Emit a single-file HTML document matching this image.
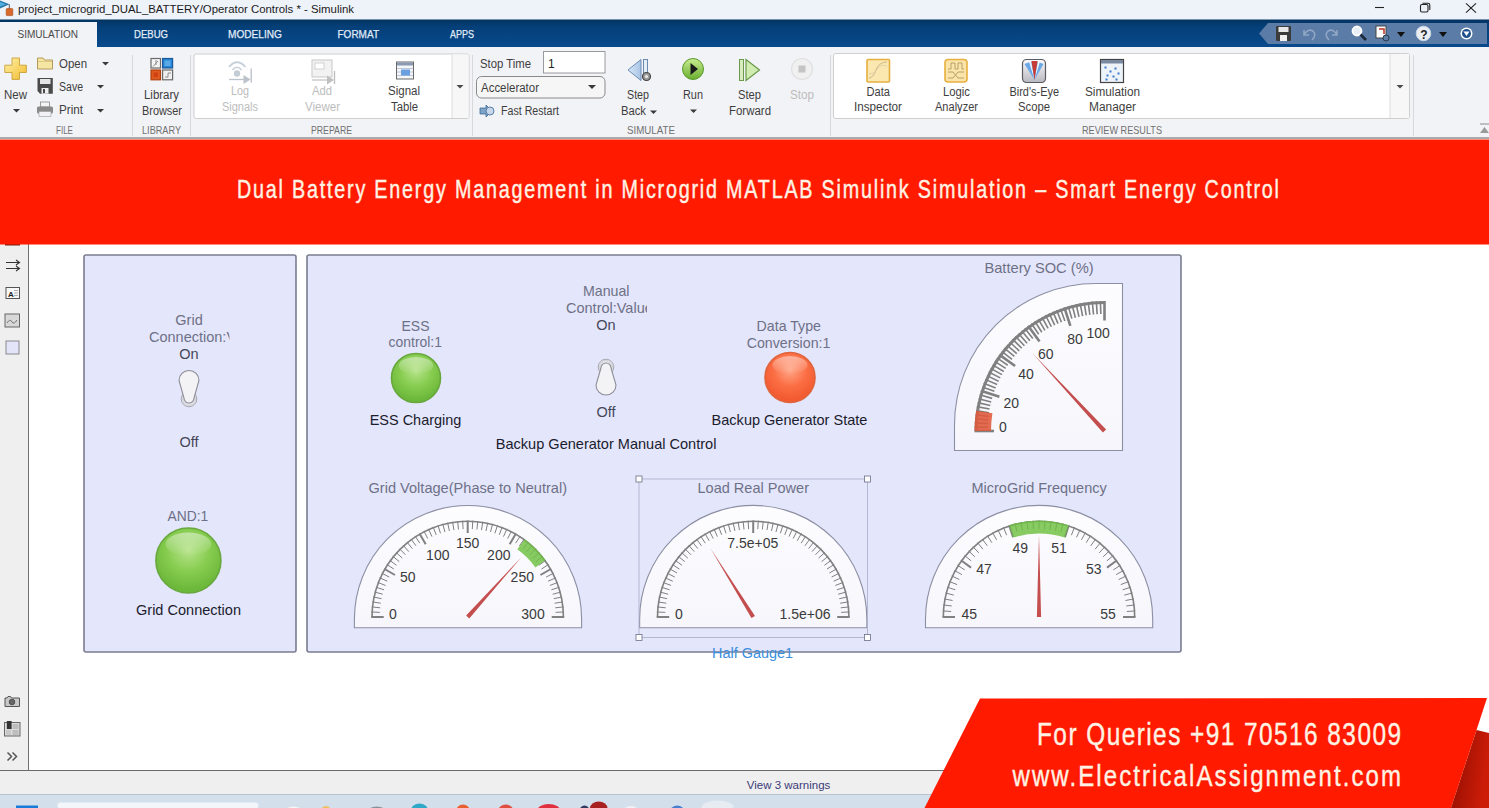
<!DOCTYPE html>
<html><head><meta charset="utf-8"><title>Simulink Operator Controls</title>
<style>
*{margin:0;padding:0;box-sizing:border-box}
html,body{width:1489px;height:808px;overflow:hidden;background:#ffffff;font-family:"Liberation Sans",sans-serif}
svg text{white-space:pre}
</style></head><body>
<svg width="1489" height="808" viewBox="0 0 1489 808" style="position:absolute;left:0;top:0;font-family:'Liberation Sans',sans-serif"><defs>
<linearGradient id="gblue" x1="0" y1="0" x2="0" y2="1"><stop offset="0" stop-color="#02335f"/><stop offset="0.25" stop-color="#053f78"/><stop offset="1" stop-color="#074a8c"/></linearGradient>
<radialGradient id="ledg" cx="0.5" cy="0.35" r="0.6"><stop offset="0" stop-color="#b6e38a"/><stop offset="0.55" stop-color="#86cc4f"/><stop offset="1" stop-color="#6cb83a"/></radialGradient>
<linearGradient id="ledgh" x1="0" y1="0" x2="0" y2="1"><stop offset="0" stop-color="#ffffff" stop-opacity="0.75"/><stop offset="1" stop-color="#ffffff" stop-opacity="0"/></linearGradient>
<radialGradient id="ledr" cx="0.5" cy="0.35" r="0.6"><stop offset="0" stop-color="#ffa688"/><stop offset="0.55" stop-color="#fb6e44"/><stop offset="1" stop-color="#f25a30"/></radialGradient>
<linearGradient id="plus" x1="0" y1="0" x2="1" y2="1"><stop offset="0" stop-color="#fff2a8"/><stop offset="1" stop-color="#f2bb30"/></linearGradient>
<linearGradient id="gframe" x1="0" y1="0" x2="0" y2="1"><stop offset="0" stop-color="#fdfdff"/><stop offset="1" stop-color="#f6f6fc"/></linearGradient>
<linearGradient id="shad" x1="0" y1="0" x2="1" y2="0.3"><stop offset="0" stop-color="#8e0c00"/><stop offset="1" stop-color="#cc1c08"/></linearGradient>
<linearGradient id="run" x1="0" y1="0" x2="0" y2="1"><stop offset="0" stop-color="#c8ec90"/><stop offset="1" stop-color="#6aae30"/></linearGradient>
<linearGradient id="sbk" x1="0" y1="0" x2="1" y2="0"><stop offset="0" stop-color="#d8e8f8"/><stop offset="1" stop-color="#a8c4e4"/></linearGradient>
<linearGradient id="bev" x1="0" y1="0" x2="0" y2="1"><stop offset="0" stop-color="#fafafa"/><stop offset="1" stop-color="#b8b8c0"/></linearGradient>
</defs>
<rect x="0" y="0" width="1489" height="20" fill="#eef2f9" rx="0" />
<path d="M0,0.5 L9.5,4.3 L0,8.5 Z" fill="#2a78a8" />
<path d="M0,2 L6,4.3 L0,6.5 Z" fill="#50b0e0" />
<line x1="9.30" y1="4.30" x2="9.30" y2="9.00" stroke="#444" stroke-width="0.9" />
<rect x="6.2" y="8.6" width="6.6" height="7" fill="#d8682c" stroke="#a84a10" stroke-width="0.6" rx="0.8" />
<text x="18.00" y="13.40" font-size="11.5" fill="#1b1b1b" textLength="336.00" lengthAdjust="spacingAndGlyphs" font-weight="normal" >project_microgrid_DUAL_BATTERY/Operator Controls * - Simulink</text>
<line x1="1375.00" y1="7.50" x2="1384.00" y2="7.50" stroke="#222" stroke-width="1.1" />
<rect x="1420.5" y="4.5" width="7.5" height="7.5" fill="none" stroke="#222" stroke-width="1.1" rx="1.5" />
<path d="M1422.5,3.2 L1428,3.2 Q1429.8,3.2 1429.8,5 L1429.8,10" fill="none" stroke="#222" stroke-width="1.1" />
<line x1="1466.00" y1="3.30" x2="1476.00" y2="12.60" stroke="#222" stroke-width="1.1" />
<line x1="1476.00" y1="3.30" x2="1466.00" y2="12.60" stroke="#222" stroke-width="1.1" />
<rect x="0" y="19.5" width="1489" height="27.5" fill="url(#gblue)" rx="0" />
<rect x="0" y="22" width="97" height="25" fill="#f2f3f6" rx="0" />
<text x="17.50" y="38.10" font-size="11.5" fill="#4a4a4a" textLength="60.50" lengthAdjust="spacingAndGlyphs" font-weight="normal" >SIMULATION</text>
<text x="134.00" y="37.90" font-size="11.5" fill="#e2ecf8" textLength="34.00" lengthAdjust="spacingAndGlyphs" font-weight="normal" stroke="#e2ecf8" stroke-width="0.25">DEBUG</text>
<text x="228.00" y="37.90" font-size="11.5" fill="#e2ecf8" textLength="54.00" lengthAdjust="spacingAndGlyphs" font-weight="normal" stroke="#e2ecf8" stroke-width="0.25">MODELING</text>
<text x="337.50" y="37.90" font-size="11.5" fill="#e2ecf8" textLength="41.50" lengthAdjust="spacingAndGlyphs" font-weight="normal" stroke="#e2ecf8" stroke-width="0.25">FORMAT</text>
<text x="450.00" y="37.90" font-size="11.5" fill="#e2ecf8" textLength="24.00" lengthAdjust="spacingAndGlyphs" font-weight="normal" stroke="#e2ecf8" stroke-width="0.25">APPS</text>
<path d="M1259,33.5 L1268,23 L1487,23 L1487,44 L1268,44 Z" fill="#5a7ca6" />
<rect x="1276" y="26" width="15" height="15" fill="#3b3b3b" rx="1" />
<rect x="1278.5" y="27" width="10" height="5" fill="#e8e8e8" rx="0" />
<rect x="1280" y="35" width="7" height="6" fill="#f0f0f0" rx="0" />
<path d="M1304,30 L1304,35 L1309,35 M1304,35 Q1308,28 1313,31 Q1317,35 1312,40" fill="none" stroke="#8fa6c4" stroke-width="1.6" />
<path d="M1337,30 L1337,35 L1332,35 M1337,35 Q1333,28 1328,31 Q1324,35 1329,40" fill="none" stroke="#8fa6c4" stroke-width="1.6" />
<circle cx="1357" cy="31" r="4.5" fill="#e8eef6" stroke="#ffffff" stroke-width="1.8" />
<line x1="1360.50" y1="34.50" x2="1366.00" y2="40.00" stroke="#1a2a3a" stroke-width="2.6" />
<rect x="1376" y="26" width="10" height="12" fill="#ffffff" stroke="#444" stroke-width="1" rx="0" />
<path d="M1379,29 L1384,29 L1384,34" fill="none" stroke="#c03020" stroke-width="1.5" />
<circle cx="1386" cy="38" r="3" fill="#5a7ca6" stroke="#2a3a4a" stroke-width="1" />
<path d="M1397,32 L1405,32 L1401,37 Z" fill="#111" />
<circle cx="1423.5" cy="33.5" r="7.3" fill="#e9eef4" stroke="#c8d4e2" stroke-width="1" />
<text x="1420.16" y="38.50" font-size="12" fill="#222" font-weight="bold" >?</text>
<path d="M1439,32 L1447,32 L1443,37 Z" fill="#111" />
<circle cx="1466.5" cy="33.5" r="6" fill="#ffffff" />
<circle cx="1466.5" cy="33.5" r="4.5" fill="#1d4f8c" />
<path d="M1463.5,31.5 L1469.5,31.5 L1466.5,36 Z" fill="#fff" />
<rect x="0" y="47" width="1489" height="90" fill="#f2f3f6" rx="0" />
<rect x="0" y="137" width="1489" height="2" fill="#aaaaaa" rx="0" />
<path d="M12,58 L19.5,58 L19.5,65.2 L26.4,65.2 L26.4,72.5 L19.5,72.5 L19.5,79.4 L12,79.4 L12,72.5 L4.8,72.5 L4.8,65.2 L12,65.2 Z" fill="url(#plus)" stroke="#c9a238" stroke-width="0.9" />
<text x="4.00" y="98.50" font-size="12" fill="#3e3e3e" textLength="23.00" lengthAdjust="spacingAndGlyphs" font-weight="normal" >New</text>
<path d="M13,109 L20,109 L16.5,112.5 Z" fill="#3a3a3a" />
<path d="M37.5,58 L43,58 L44.5,60 L52.5,60 L52.5,69 L37.5,69 Z" fill="#f6e6a4" stroke="#b49a5a" stroke-width="1" />
<line x1="38.00" y1="61.50" x2="52.00" y2="61.50" stroke="#d8c27a" stroke-width="0.8" />
<text x="59.00" y="67.50" font-size="12" fill="#3e3e3e" textLength="28.00" lengthAdjust="spacingAndGlyphs" font-weight="normal" >Open</text>
<path d="M102,62 L109,62 L105.5,65.5 Z" fill="#3a3a3a" />
<path d="M37.5,78 L52.8,78 L52.8,93.7 L40,93.7 L37.5,91 Z" fill="#4a4a4a" />
<rect x="40" y="79" width="10.5" height="5" fill="#e6e6e6" rx="0" />
<rect x="41.5" y="88" width="7" height="5.7" fill="#eeeeee" rx="0" />
<rect x="43" y="89" width="2" height="4" fill="#4a4a4a" rx="0" />
<text x="59.00" y="90.70" font-size="12" fill="#3e3e3e" textLength="24.00" lengthAdjust="spacingAndGlyphs" font-weight="normal" >Save</text>
<path d="M97,85 L104,85 L100.5,88.5 Z" fill="#3a3a3a" />
<rect x="40.5" y="102" width="9" height="5" fill="#f4f4f4" stroke="#888" stroke-width="0.8" rx="0" />
<rect x="37" y="106.5" width="16" height="7" fill="#8a8a8a" rx="1.5" />
<rect x="39" y="111.5" width="12" height="5" fill="#f2f2f6" stroke="#999" stroke-width="0.6" rx="0" />
<text x="59.00" y="114.20" font-size="12" fill="#3e3e3e" textLength="24.00" lengthAdjust="spacingAndGlyphs" font-weight="normal" >Print</text>
<path d="M97,109 L104,109 L100.5,112.5 Z" fill="#3a3a3a" />
<text x="56.00" y="134.30" font-size="10.5" fill="#707070" textLength="17.00" lengthAdjust="spacingAndGlyphs" font-weight="normal" >FILE</text>
<line x1="132.50" y1="55.00" x2="132.50" y2="136.00" stroke="#d8d8da" stroke-width="1" />
<rect x="151" y="58.5" width="9.5" height="9.5" fill="#f4f4f4" stroke="#6a6a6a" stroke-width="1.2" rx="0" />
<path d="M153,66.5 L158,61 M156,60 L156,65" fill="none" stroke="#777" stroke-width="0.8" />
<rect x="162.6" y="58.5" width="10" height="9.5" fill="#2a86d8" stroke="#1a5a9a" stroke-width="1.2" rx="0" />
<rect x="164.5" y="60.5" width="6" height="5.5" fill="#5aaae8" rx="0" />
<rect x="151" y="70" width="9.5" height="9.8" fill="#e05a20" stroke="#b04010" stroke-width="1.2" rx="0" />
<rect x="153.5" y="72.5" width="4.5" height="4.5" fill="#d04010" rx="0" />
<rect x="162.6" y="70" width="10" height="9.8" fill="#f0f0f0" stroke="#6a6a6a" stroke-width="1.2" rx="0" />
<path d="M165,77 L168,77 L168,73 L171,73" fill="none" stroke="#777" stroke-width="0.8" />
<text x="144.00" y="99.40" font-size="12" fill="#3e3e3e" textLength="35.00" lengthAdjust="spacingAndGlyphs" font-weight="normal" >Library</text>
<text x="142.00" y="114.80" font-size="12" fill="#3e3e3e" textLength="40.00" lengthAdjust="spacingAndGlyphs" font-weight="normal" >Browser</text>
<text x="142.00" y="134.30" font-size="10.5" fill="#707070" textLength="39.00" lengthAdjust="spacingAndGlyphs" font-weight="normal" >LIBRARY</text>
<line x1="190.50" y1="55.00" x2="190.50" y2="136.00" stroke="#d8d8da" stroke-width="1" />
<rect x="194" y="54" width="275" height="64.5" fill="#ffffff" stroke="#cfcfcf" stroke-width="1" rx="2" />
<rect x="452" y="54.5" width="16.5" height="63.5" fill="#f7f7f7" rx="0" />
<line x1="452.00" y1="54.50" x2="452.00" y2="118.00" stroke="#dedede" stroke-width="1" />
<path d="M456.5,85 L463.5,85 L460,88.5 Z" fill="#4a4a4a" />
<path d="M229,67 Q237,57.5 245.5,67" fill="none" stroke="#c8d0da" stroke-width="1.8" />
<path d="M232.5,70 Q237,64.5 241.5,70" fill="none" stroke="#c8d0da" stroke-width="1.6" />
<circle cx="237" cy="73.5" r="3.2" fill="#c4ccd6" />
<line x1="229.00" y1="79.50" x2="246.00" y2="79.50" stroke="#bcc2ca" stroke-width="1.3" />
<path d="M243.5,75 L250.5,79.5 L243.5,84 Z" fill="#bcc2ca" />
<line x1="251.20" y1="68.50" x2="251.20" y2="82.50" stroke="#bcc2ca" stroke-width="1.4" />
<text x="231.00" y="95.40" font-size="12" fill="#bdbdbd" textLength="18.00" lengthAdjust="spacingAndGlyphs" font-weight="normal" >Log</text>
<text x="222.00" y="111.00" font-size="12" fill="#bdbdbd" textLength="36.00" lengthAdjust="spacingAndGlyphs" font-weight="normal" >Signals</text>
<rect x="312" y="60" width="20" height="17" fill="#f2f2f2" stroke="#c8c8c8" stroke-width="1" rx="0" />
<rect x="315" y="63" width="9" height="6" fill="#ffffff" stroke="#c8c8c8" stroke-width="0.8" rx="0" />
<line x1="312.00" y1="80.00" x2="331.00" y2="80.00" stroke="#c0c0c0" stroke-width="1.2" />
<path d="M327,75.5 L334,80 L327,84.5 Z" fill="#c0c0c0" />
<line x1="334.50" y1="71.00" x2="334.50" y2="84.00" stroke="#c0c0c0" stroke-width="1.4" />
<text x="312.00" y="95.40" font-size="12" fill="#bdbdbd" textLength="20.00" lengthAdjust="spacingAndGlyphs" font-weight="normal" >Add</text>
<text x="305.00" y="111.00" font-size="12" fill="#bdbdbd" textLength="35.00" lengthAdjust="spacingAndGlyphs" font-weight="normal" >Viewer</text>
<rect x="396.5" y="62" width="17" height="17" fill="#f4f6fa" stroke="#6a6a6a" stroke-width="1" rx="0" />
<rect x="397" y="62.5" width="16" height="3" fill="#8a9ab0" rx="0" />
<line x1="397.00" y1="68.50" x2="413.00" y2="68.50" stroke="#a8b4c8" stroke-width="0.7" />
<line x1="397.00" y1="72.00" x2="413.00" y2="72.00" stroke="#a8b4c8" stroke-width="0.7" />
<line x1="397.00" y1="75.50" x2="413.00" y2="75.50" stroke="#a8b4c8" stroke-width="0.7" />
<rect x="401" y="69.5" width="9" height="6" fill="#6aa0e0" rx="0" />
<text x="388.00" y="95.40" font-size="12" fill="#3e3e3e" textLength="32.00" lengthAdjust="spacingAndGlyphs" font-weight="normal" >Signal</text>
<text x="391.00" y="111.00" font-size="12" fill="#3e3e3e" textLength="27.00" lengthAdjust="spacingAndGlyphs" font-weight="normal" >Table</text>
<text x="311.00" y="134.30" font-size="10.5" fill="#707070" textLength="41.00" lengthAdjust="spacingAndGlyphs" font-weight="normal" >PREPARE</text>
<line x1="472.50" y1="55.00" x2="472.50" y2="136.00" stroke="#d8d8da" stroke-width="1" />
<text x="480.00" y="67.70" font-size="12" fill="#3e3e3e" textLength="51.00" lengthAdjust="spacingAndGlyphs" font-weight="normal" >Stop Time</text>
<rect x="543.5" y="51.5" width="61.5" height="21.5" fill="#ffffff" stroke="#9a9a9a" stroke-width="1" rx="0" />
<text x="548.00" y="67.50" font-size="12" fill="#222" font-weight="normal" >1</text>
<rect x="476.5" y="76.5" width="128.5" height="21.5" fill="#f6f6f6" stroke="#8a8a8a" stroke-width="1" rx="5" />
<text x="481.00" y="91.60" font-size="12" fill="#3e3e3e" textLength="58.00" lengthAdjust="spacingAndGlyphs" font-weight="normal" >Accelerator</text>
<path d="M588,85 L596,85 L592,89 Z" fill="#3a3a3a" />
<path d="M480,108 L486,108 L486,105 L492,111 L486,117 L486,114 L480,114 Z" fill="#7da3c8" stroke="#3d6a9a" stroke-width="0.8" />
<circle cx="490" cy="111" r="4" fill="#c8d8ea" stroke="#5a7ea8" stroke-width="1" />
<text x="501.00" y="115.00" font-size="12" fill="#3e3e3e" textLength="58.00" lengthAdjust="spacingAndGlyphs" font-weight="normal" >Fast Restart</text>
<path d="M628,70 L641,59.5 L641,80.5 Z" fill="url(#sbk)" stroke="#6a8cb8" stroke-width="1" />
<rect x="643.5" y="59.5" width="4" height="18" fill="#e4eef8" stroke="#6a8ab0" stroke-width="1" rx="0" />
<circle cx="646.5" cy="76.5" r="4" fill="#9a9a9a" stroke="#444" stroke-width="1.2" />
<circle cx="646.5" cy="76.5" r="1.5" fill="#eee" />
<text x="627.00" y="99.20" font-size="12" fill="#3e3e3e" textLength="22.00" lengthAdjust="spacingAndGlyphs" font-weight="normal" >Step</text>
<text x="621.00" y="115.00" font-size="12" fill="#3e3e3e" textLength="25.00" lengthAdjust="spacingAndGlyphs" font-weight="normal" >Back</text>
<path d="M650,110.5 L657,110.5 L653.5,114 Z" fill="#3a3a3a" />
<circle cx="693" cy="69" r="10.5" fill="url(#run)" stroke="#5a9a2a" stroke-width="1" />
<path d="M690.5,63 L698,69 L690.5,75 Z" fill="#1a1a1a" />
<text x="683.00" y="99.20" font-size="12" fill="#3e3e3e" textLength="20.00" lengthAdjust="spacingAndGlyphs" font-weight="normal" >Run</text>
<path d="M690,109.5 L697,109.5 L693.5,113 Z" fill="#3a3a3a" />
<rect x="739.5" y="59.5" width="4" height="21" fill="#d8ecc0" stroke="#6a9a4a" stroke-width="1" rx="0" />
<path d="M746,59.5 L759.5,70 L746,80.5 Z" fill="#d0ecb0" stroke="#6a9a4a" stroke-width="1.2" />
<text x="738.00" y="99.20" font-size="12" fill="#3e3e3e" textLength="23.00" lengthAdjust="spacingAndGlyphs" font-weight="normal" >Step</text>
<text x="729.00" y="115.00" font-size="12" fill="#3e3e3e" textLength="42.00" lengthAdjust="spacingAndGlyphs" font-weight="normal" >Forward</text>
<circle cx="802" cy="69" r="10.5" fill="#f0f0f0" stroke="#e0e0e0" stroke-width="1.2" />
<rect x="798.5" y="65.5" width="7" height="7" fill="#c4c4c4" rx="0" />
<text x="790.00" y="99.20" font-size="12" fill="#bdbdbd" textLength="24.00" lengthAdjust="spacingAndGlyphs" font-weight="normal" >Stop</text>
<text x="627.00" y="134.40" font-size="10.5" fill="#707070" textLength="48.00" lengthAdjust="spacingAndGlyphs" font-weight="normal" >SIMULATE</text>
<line x1="830.50" y1="55.00" x2="830.50" y2="136.00" stroke="#d8d8da" stroke-width="1" />
<rect x="833.5" y="53.5" width="576" height="65" fill="#ffffff" stroke="#cfcfcf" stroke-width="1" rx="2" />
<rect x="1390" y="54" width="19" height="64" fill="#f7f7f7" rx="0" />
<line x1="1390.00" y1="54.00" x2="1390.00" y2="118.00" stroke="#dedede" stroke-width="1" />
<path d="M1396.5,85 L1403.5,85 L1400,88.5 Z" fill="#4a4a4a" />
<rect x="867" y="59.5" width="22.5" height="22.5" fill="#fbe7b0" stroke="#e6b040" stroke-width="1.6" rx="1" />
<path d="M869,78 Q873,78 876,70 Q879,62 887,62" fill="none" stroke="#c8b888" stroke-width="1" />
<path d="M869,74 Q875,74 878,68 Q881,64 887,66" fill="none" stroke="#d8cca8" stroke-width="0.8" />
<text x="866.60" y="95.50" font-size="12" fill="#3e3e3e" textLength="23.40" lengthAdjust="spacingAndGlyphs" font-weight="normal" >Data</text>
<text x="854.00" y="111.00" font-size="12" fill="#3e3e3e" textLength="48.00" lengthAdjust="spacingAndGlyphs" font-weight="normal" >Inspector</text>
<rect x="945" y="59.5" width="22" height="22.5" fill="#fbe4a8" stroke="#e8b040" stroke-width="1.6" rx="3" />
<path d="M948,69 L951,69 L951,63 L955,63 L955,69 L958,69 L958,63 L962,63 L962,69 L964,69" fill="none" stroke="#b09a68" stroke-width="0.9" />
<path d="M948,72 L953,72 L958,78 L964,78 M948,78 L953,78 L958,72 L964,72" fill="none" stroke="#b09a68" stroke-width="0.9" />
<text x="943.00" y="95.50" font-size="12" fill="#3e3e3e" textLength="27.00" lengthAdjust="spacingAndGlyphs" font-weight="normal" >Logic</text>
<text x="935.00" y="111.00" font-size="12" fill="#3e3e3e" textLength="43.00" lengthAdjust="spacingAndGlyphs" font-weight="normal" >Analyzer</text>
<rect x="1022.5" y="59.5" width="23" height="23" fill="url(#bev)" stroke="#5a5a62" stroke-width="1.2" rx="4" />
<path d="M1024.5,64 Q1034,59 1043.5,64 L1034.5,80 Z" fill="#6aa8e8" />
<path d="M1029,61.5 L1031,61.2 L1034.5,80 Z M1038,61.2 L1040,61.5 L1034.5,80 Z" fill="#f4f6fa" />
<path d="M1031.5,61 L1037.5,61 L1034.5,80 Z" fill="#c83a34" />
<text x="1009.50" y="95.50" font-size="12" fill="#3e3e3e" textLength="49.50" lengthAdjust="spacingAndGlyphs" font-weight="normal" >Bird's-Eye</text>
<text x="1018.00" y="111.00" font-size="12" fill="#3e3e3e" textLength="32.00" lengthAdjust="spacingAndGlyphs" font-weight="normal" >Scope</text>
<rect x="1100.5" y="59.5" width="23" height="23" fill="#eef3fa" stroke="#444" stroke-width="1.2" rx="0" />
<rect x="1101" y="60" width="22" height="3.5" fill="#7a8aa0" rx="0" />
<rect x="1104.5" y="66.5" width="2" height="2" fill="#3a7ac8" rx="0" />
<rect x="1109.5" y="70.5" width="2" height="2" fill="#3a7ac8" rx="0" />
<rect x="1114.5" y="67.5" width="2" height="2" fill="#3a7ac8" rx="0" />
<rect x="1106.5" y="74.5" width="2" height="2" fill="#3a7ac8" rx="0" />
<rect x="1112.5" y="75.5" width="2" height="2" fill="#3a7ac8" rx="0" />
<rect x="1117.5" y="72.5" width="2" height="2" fill="#3a7ac8" rx="0" />
<rect x="1105.5" y="78.5" width="2" height="2" fill="#3a7ac8" rx="0" />
<rect x="1115.5" y="78.5" width="2" height="2" fill="#3a7ac8" rx="0" />
<text x="1085.00" y="95.50" font-size="12" fill="#3e3e3e" textLength="55.00" lengthAdjust="spacingAndGlyphs" font-weight="normal" >Simulation</text>
<text x="1089.00" y="111.00" font-size="12" fill="#3e3e3e" textLength="47.00" lengthAdjust="spacingAndGlyphs" font-weight="normal" >Manager</text>
<text x="1082.00" y="134.40" font-size="10.5" fill="#707070" textLength="80.00" lengthAdjust="spacingAndGlyphs" font-weight="normal" >REVIEW RESULTS</text>
<line x1="1413.50" y1="55.00" x2="1413.50" y2="136.00" stroke="#d8d8da" stroke-width="1" />
<line x1="1480.00" y1="124.00" x2="1489.00" y2="124.00" stroke="#8a8a8a" stroke-width="1" />
<path d="M1480,133 L1489,133 L1484.5,127 Z" fill="#9a9a9a" />
<rect x="0" y="244" width="1489" height="526" fill="#ffffff" rx="0" />
<rect x="0" y="244" width="28" height="526" fill="#efefef" rx="0" />
<line x1="28.50" y1="244.00" x2="28.50" y2="770.00" stroke="#707070" stroke-width="1" />
<path d="M6,262.5 L19,262.5 M16,260 L19.5,262.5 L16,265 M6,268.5 L19,268.5 M16,266 L19.5,268.5 L16,271" fill="none" stroke="#333" stroke-width="1.1" />
<rect x="6" y="287.5" width="13.5" height="11" fill="#f8f8f8" stroke="#555" stroke-width="1" rx="0" />
<text x="8.00" y="296.50" font-size="8" fill="#222" font-weight="bold" >A</text>
<line x1="14.00" y1="290.50" x2="18.00" y2="290.50" stroke="#999" stroke-width="0.8" />
<line x1="14.00" y1="293.00" x2="18.00" y2="293.00" stroke="#999" stroke-width="0.8" />
<line x1="14.00" y1="295.50" x2="18.00" y2="295.50" stroke="#999" stroke-width="0.8" />
<rect x="5" y="314" width="14.5" height="13" fill="#d8d8d8" stroke="#666" stroke-width="1" rx="0" />
<path d="M7,323 Q10,318 12,322 Q14,325 17,320" fill="none" stroke="#777" stroke-width="1" />
<rect x="6" y="341" width="13" height="13" fill="#e3e4f7" stroke="#8a8a90" stroke-width="1" rx="0" />
<path d="M5,698 L7,698 L8,696.5 L10.5,696.5 L11.5,698 L19.5,698 L19.5,706.5 L5,706.5 Z" fill="#c8c8c8" stroke="#555" stroke-width="1" />
<circle cx="12" cy="702" r="2.8" fill="#666" stroke="#444" stroke-width="0.8" />
<rect x="4.5" y="722.5" width="15.5" height="13.5" fill="#dcdcdc" stroke="#666" stroke-width="1" rx="0" />
<rect x="6.8" y="721" width="4.8" height="8" fill="#333" rx="0" />
<rect x="12.5" y="724" width="6" height="5" fill="#bdbdbd" rx="0" />
<rect x="12.5" y="730" width="6" height="5" fill="#bdbdbd" rx="0" />
<rect x="6" y="730" width="5" height="5" fill="#c8c8c8" rx="0" />
<path d="M7.5,752.5 L11.5,756.5 L7.5,760.5 M12.5,752.5 L16.5,756.5 L12.5,760.5" fill="none" stroke="#555" stroke-width="1.5" />
<rect x="5" y="243" width="15" height="2.5" fill="#7a1a10" rx="0" />
<rect x="0" y="770" width="1489" height="24" fill="#efefef" rx="0" />
<line x1="0.00" y1="770.50" x2="1489.00" y2="770.50" stroke="#6a6a6a" stroke-width="1" />
<text x="746.80" y="788.50" font-size="11.5" fill="#3c3c78" textLength="83.50" lengthAdjust="spacingAndGlyphs" font-weight="normal" >View 3 warnings</text>
<rect x="0" y="794" width="1489" height="14" fill="#d3e0ec" rx="0" />
<line x1="0.00" y1="794.50" x2="1489.00" y2="794.50" stroke="#b8c4d0" stroke-width="1" />
<rect x="16" y="805.5" width="22" height="3" fill="#1a7ad8" rx="0" />
<rect x="57.5" y="802.5" width="201" height="6" fill="#f2f6fa" rx="3" />
<ellipse cx="293.55" cy="813.5" rx="10.050000000000011" ry="7" fill="#f4f4f4"/>
<ellipse cx="326.0" cy="813" rx="6.0" ry="7" fill="#eec060"/>
<ellipse cx="376.8" cy="813.5" rx="10.800000000000011" ry="7" fill="#8a9098"/>
<ellipse cx="419.5" cy="810.5" rx="8.5" ry="7" fill="#30a8c8"/>
<ellipse cx="463.0" cy="811.5" rx="7.0" ry="7" fill="#e86030"/>
<ellipse cx="505.75" cy="811.5" rx="7.75" ry="7" fill="#e05040"/>
<ellipse cx="548.75" cy="811" rx="11.75" ry="7" fill="#e03040"/>
<ellipse cx="584.5" cy="812.5" rx="5.5" ry="7" fill="#303a60"/>
<ellipse cx="598.75" cy="808.5" rx="8.75" ry="7" fill="#a82020"/>
<ellipse cx="631.05" cy="813" rx="8.449999999999989" ry="7" fill="#eef2f6"/>
<ellipse cx="677.25" cy="812.5" rx="7.5499999999999545" ry="7" fill="#4a80d0"/>
<ellipse cx="717.55" cy="807.5" rx="15.949999999999989" ry="7" fill="#e6ecf2"/>
<rect x="84" y="255" width="212" height="397" fill="#e4e6fc" stroke="#7a7d90" stroke-width="1.6" rx="2" />
<rect x="307" y="255" width="874" height="397" fill="#e4e6fc" stroke="#7a7d90" stroke-width="1.6" rx="2" />
<text x="175.30" y="324.80" font-size="14.5" fill="#6e7186" font-weight="normal" >Grid</text>
<clipPath id="cp1"><rect x="140" y="325" width="89.5" height="25"/></clipPath>
<text x="149.00" y="342.00" font-size="14.5" fill="#6e7186" font-weight="normal" clip-path="url(#cp1)">Connection:V</text>
<text x="179.33" y="359.40" font-size="14.5" fill="#454757" font-weight="normal" >On</text>
<circle cx="189" cy="399" r="7.8" fill="#e6e6ec" stroke="#a9a9b2" stroke-width="1" />
<circle cx="189" cy="399" r="6.4" fill="none" stroke="#c8c8d0" stroke-width="0.8" />
<path d="M179,380.5 A10,10 0 0 1 199,380.5 L194,398 A5,5 0 0 1 184,398 Z" fill="#f3f3f6" stroke="#8c8c96" stroke-width="1.1" />
<text x="179.46" y="446.50" font-size="14.5" fill="#454757" font-weight="normal" >Off</text>
<text x="167.50" y="521.00" font-size="14" fill="#6e7186" textLength="40.70" lengthAdjust="spacingAndGlyphs" font-weight="normal" >AND:1</text>
<circle cx="188.4" cy="560.5" r="32.5" fill="url(#ledg)" stroke="#68a83e" stroke-width="1.6" />
<ellipse cx="188.4" cy="544.25" rx="22.75" ry="11.7" fill="url(#ledgh)" opacity="0.6"/>
<text x="136.00" y="615.00" font-size="14.5" fill="#1b1c2c" textLength="105.00" lengthAdjust="spacingAndGlyphs" font-weight="normal" >Grid Connection</text>
<text x="401.50" y="331.00" font-size="14.5" fill="#6e7186" textLength="28.00" lengthAdjust="spacingAndGlyphs" font-weight="normal" >ESS</text>
<text x="388.60" y="347.30" font-size="14.5" fill="#6e7186" textLength="53.40" lengthAdjust="spacingAndGlyphs" font-weight="normal" >control:1</text>
<circle cx="416" cy="378" r="24.5" fill="url(#ledg)" stroke="#68a83e" stroke-width="1.6" />
<ellipse cx="416" cy="365.75" rx="17.15" ry="8.82" fill="url(#ledgh)" opacity="0.6"/>
<text x="369.70" y="424.60" font-size="14.5" fill="#1b1c2c" textLength="91.70" lengthAdjust="spacingAndGlyphs" font-weight="normal" >ESS Charging</text>
<text x="583.00" y="295.80" font-size="14.5" fill="#6e7186" textLength="46.50" lengthAdjust="spacingAndGlyphs" font-weight="normal" >Manual</text>
<clipPath id="cp2"><rect x="555" y="298" width="92" height="22"/></clipPath>
<text x="566.00" y="313.00" font-size="14.5" fill="#6e7186" font-weight="normal" clip-path="url(#cp2)">Control:Value</text>
<text x="596.33" y="329.80" font-size="14.5" fill="#454757" font-weight="normal" >On</text>
<circle cx="606" cy="367" r="7.8" fill="#e6e6ec" stroke="#a9a9b2" stroke-width="1" />
<circle cx="606" cy="367" r="6.4" fill="none" stroke="#c8c8d0" stroke-width="0.8" />
<path d="M601,368 A5,5 0 0 1 611,368 L616,385 A10,10 0 0 1 596,385 Z" fill="#f3f3f6" stroke="#8c8c96" stroke-width="1.1" />
<text x="596.46" y="416.50" font-size="14.5" fill="#454757" font-weight="normal" >Off</text>
<text x="495.80" y="449.00" font-size="14.5" fill="#1b1c2c" textLength="220.60" lengthAdjust="spacingAndGlyphs" font-weight="normal" >Backup Generator Manual Control</text>
<text x="756.60" y="331.20" font-size="14.5" fill="#6e7186" textLength="64.40" lengthAdjust="spacingAndGlyphs" font-weight="normal" >Data Type</text>
<text x="746.70" y="347.80" font-size="14.5" fill="#6e7186" textLength="83.70" lengthAdjust="spacingAndGlyphs" font-weight="normal" >Conversion:1</text>
<circle cx="790" cy="377.5" r="25" fill="url(#ledr)" stroke="#e0643c" stroke-width="1.6" />
<ellipse cx="790" cy="365.0" rx="17.5" ry="9.0" fill="url(#ledgh)" opacity="0.6"/>
<text x="711.60" y="424.60" font-size="14.5" fill="#1b1c2c" textLength="155.80" lengthAdjust="spacingAndGlyphs" font-weight="normal" >Backup Generator State</text>
<text x="368.50" y="492.50" font-size="14.5" fill="#6e7186" textLength="198.50" lengthAdjust="spacingAndGlyphs" font-weight="normal" >Grid Voltage(Phase to Neutral)</text>
<path d="M354.4,627.8 L354.4,619 A113.6,113.6 0 0 1 581.6,619 L581.6,627.8 Z" fill="url(#gframe)" stroke="#8c8fa2" stroke-width="1.1" />
<path d="M372.00,617.00 A95.7,95.7 0 0 1 563.40,617.00" fill="none" stroke="#808080" stroke-width="1.6" />
<line x1="371.20" y1="617.00" x2="383.70" y2="617.00" stroke="#808080" stroke-width="2.0" />
<line x1="371.33" y1="611.95" x2="379.82" y2="612.39" stroke="#808080" stroke-width="1.0" />
<line x1="371.73" y1="606.91" x2="380.18" y2="607.80" stroke="#808080" stroke-width="1.0" />
<line x1="372.39" y1="601.90" x2="380.78" y2="603.23" stroke="#808080" stroke-width="1.0" />
<line x1="373.31" y1="596.94" x2="381.62" y2="598.70" stroke="#808080" stroke-width="1.0" />
<line x1="374.49" y1="592.02" x2="382.70" y2="594.22" stroke="#808080" stroke-width="1.0" />
<line x1="375.92" y1="587.18" x2="384.01" y2="589.81" stroke="#808080" stroke-width="1.0" />
<line x1="377.61" y1="582.42" x2="385.54" y2="585.46" stroke="#808080" stroke-width="1.0" />
<line x1="379.54" y1="577.75" x2="387.31" y2="581.21" stroke="#808080" stroke-width="1.0" />
<line x1="381.72" y1="573.19" x2="389.29" y2="577.05" stroke="#808080" stroke-width="1.0" />
<line x1="384.13" y1="568.75" x2="394.95" y2="575.00" stroke="#808080" stroke-width="2.0" />
<line x1="386.77" y1="564.44" x2="393.90" y2="569.07" stroke="#808080" stroke-width="1.0" />
<line x1="389.63" y1="560.28" x2="396.51" y2="565.27" stroke="#808080" stroke-width="1.0" />
<line x1="392.71" y1="556.27" x2="399.31" y2="561.62" stroke="#808080" stroke-width="1.0" />
<line x1="395.99" y1="552.43" x2="402.30" y2="558.12" stroke="#808080" stroke-width="1.0" />
<line x1="399.46" y1="548.76" x2="405.47" y2="554.77" stroke="#808080" stroke-width="1.0" />
<line x1="403.13" y1="545.29" x2="408.82" y2="551.60" stroke="#808080" stroke-width="1.0" />
<line x1="406.97" y1="542.01" x2="412.32" y2="548.61" stroke="#808080" stroke-width="1.0" />
<line x1="410.98" y1="538.93" x2="415.97" y2="545.81" stroke="#808080" stroke-width="1.0" />
<line x1="415.14" y1="536.07" x2="419.77" y2="543.20" stroke="#808080" stroke-width="1.0" />
<line x1="419.45" y1="533.43" x2="425.70" y2="544.25" stroke="#808080" stroke-width="2.0" />
<line x1="423.89" y1="531.02" x2="427.75" y2="538.59" stroke="#808080" stroke-width="1.0" />
<line x1="428.45" y1="528.84" x2="431.91" y2="536.61" stroke="#808080" stroke-width="1.0" />
<line x1="433.12" y1="526.91" x2="436.16" y2="534.84" stroke="#808080" stroke-width="1.0" />
<line x1="437.88" y1="525.22" x2="440.51" y2="533.31" stroke="#808080" stroke-width="1.0" />
<line x1="442.72" y1="523.79" x2="444.92" y2="532.00" stroke="#808080" stroke-width="1.0" />
<line x1="447.64" y1="522.61" x2="449.40" y2="530.92" stroke="#808080" stroke-width="1.0" />
<line x1="452.60" y1="521.69" x2="453.93" y2="530.08" stroke="#808080" stroke-width="1.0" />
<line x1="457.61" y1="521.03" x2="458.50" y2="529.48" stroke="#808080" stroke-width="1.0" />
<line x1="462.65" y1="520.63" x2="463.09" y2="529.12" stroke="#808080" stroke-width="1.0" />
<line x1="467.70" y1="520.50" x2="467.70" y2="533.00" stroke="#808080" stroke-width="2.0" />
<line x1="472.75" y1="520.63" x2="472.31" y2="529.12" stroke="#808080" stroke-width="1.0" />
<line x1="477.79" y1="521.03" x2="476.90" y2="529.48" stroke="#808080" stroke-width="1.0" />
<line x1="482.80" y1="521.69" x2="481.47" y2="530.08" stroke="#808080" stroke-width="1.0" />
<line x1="487.76" y1="522.61" x2="486.00" y2="530.92" stroke="#808080" stroke-width="1.0" />
<line x1="492.68" y1="523.79" x2="490.48" y2="532.00" stroke="#808080" stroke-width="1.0" />
<line x1="497.52" y1="525.22" x2="494.89" y2="533.31" stroke="#808080" stroke-width="1.0" />
<line x1="502.28" y1="526.91" x2="499.24" y2="534.84" stroke="#808080" stroke-width="1.0" />
<line x1="506.95" y1="528.84" x2="503.49" y2="536.61" stroke="#808080" stroke-width="1.0" />
<line x1="511.51" y1="531.02" x2="507.65" y2="538.59" stroke="#808080" stroke-width="1.0" />
<line x1="515.95" y1="533.43" x2="509.70" y2="544.25" stroke="#808080" stroke-width="2.0" />
<line x1="520.26" y1="536.07" x2="515.63" y2="543.20" stroke="#808080" stroke-width="1.0" />
<line x1="524.42" y1="538.93" x2="519.43" y2="545.81" stroke="#808080" stroke-width="1.0" />
<line x1="528.43" y1="542.01" x2="523.08" y2="548.61" stroke="#808080" stroke-width="1.0" />
<line x1="532.27" y1="545.29" x2="526.58" y2="551.60" stroke="#808080" stroke-width="1.0" />
<line x1="535.94" y1="548.76" x2="529.93" y2="554.77" stroke="#808080" stroke-width="1.0" />
<line x1="539.41" y1="552.43" x2="533.10" y2="558.12" stroke="#808080" stroke-width="1.0" />
<line x1="542.69" y1="556.27" x2="536.09" y2="561.62" stroke="#808080" stroke-width="1.0" />
<line x1="545.77" y1="560.28" x2="538.89" y2="565.27" stroke="#808080" stroke-width="1.0" />
<line x1="548.63" y1="564.44" x2="541.50" y2="569.07" stroke="#808080" stroke-width="1.0" />
<line x1="551.27" y1="568.75" x2="540.45" y2="575.00" stroke="#808080" stroke-width="2.0" />
<line x1="553.68" y1="573.19" x2="546.11" y2="577.05" stroke="#808080" stroke-width="1.0" />
<line x1="555.86" y1="577.75" x2="548.09" y2="581.21" stroke="#808080" stroke-width="1.0" />
<line x1="557.79" y1="582.42" x2="549.86" y2="585.46" stroke="#808080" stroke-width="1.0" />
<line x1="559.48" y1="587.18" x2="551.39" y2="589.81" stroke="#808080" stroke-width="1.0" />
<line x1="560.91" y1="592.02" x2="552.70" y2="594.22" stroke="#808080" stroke-width="1.0" />
<line x1="562.09" y1="596.94" x2="553.78" y2="598.70" stroke="#808080" stroke-width="1.0" />
<line x1="563.01" y1="601.90" x2="554.62" y2="603.23" stroke="#808080" stroke-width="1.0" />
<line x1="563.67" y1="606.91" x2="555.22" y2="607.80" stroke="#808080" stroke-width="1.0" />
<line x1="564.07" y1="611.95" x2="555.58" y2="612.39" stroke="#808080" stroke-width="1.0" />
<line x1="564.20" y1="617.00" x2="551.70" y2="617.00" stroke="#808080" stroke-width="2.0" />
<path d="M524.69,539.13 A96.5,96.5 0 0 1 545.57,560.01 L535.48,567.39 A84.0,84.0 0 0 0 517.31,549.22 Z" fill="#6cc040" opacity="0.82" />
<text x="389.11" y="619.00" font-size="14" fill="#3a3a3a" font-weight="normal" >0</text>
<text x="399.91" y="582.00" font-size="14" fill="#3a3a3a" font-weight="normal" >50</text>
<text x="426.12" y="560.00" font-size="14" fill="#3a3a3a" font-weight="normal" >100</text>
<text x="456.02" y="548.00" font-size="14" fill="#3a3a3a" font-weight="normal" >150</text>
<text x="487.12" y="560.00" font-size="14" fill="#3a3a3a" font-weight="normal" >200</text>
<text x="510.62" y="582.00" font-size="14" fill="#3a3a3a" font-weight="normal" >250</text>
<text x="521.32" y="619.00" font-size="14" fill="#3a3a3a" font-weight="normal" >300</text>
<path d="M521.13,557.46 L466.14,615.60 L469.26,618.40 Z" fill="#c44e4e" />
<text x="697.50" y="492.50" font-size="14.5" fill="#6e7186" textLength="111.50" lengthAdjust="spacingAndGlyphs" font-weight="normal" >Load Real Power</text>
<path d="M639.65,627.8 L639.65,619 A113.6,113.6 0 0 1 866.85,619 L866.85,627.8 Z" fill="url(#gframe)" stroke="#8c8fa2" stroke-width="1.1" />
<path d="M657.50,617.00 A95.7,95.7 0 0 1 848.90,617.00" fill="none" stroke="#808080" stroke-width="1.6" />
<line x1="656.70" y1="617.00" x2="669.20" y2="617.00" stroke="#808080" stroke-width="2.0" />
<line x1="656.83" y1="611.95" x2="665.32" y2="612.39" stroke="#808080" stroke-width="1.0" />
<line x1="657.23" y1="606.91" x2="665.68" y2="607.80" stroke="#808080" stroke-width="1.0" />
<line x1="657.89" y1="601.90" x2="666.28" y2="603.23" stroke="#808080" stroke-width="1.0" />
<line x1="658.81" y1="596.94" x2="667.12" y2="598.70" stroke="#808080" stroke-width="1.0" />
<line x1="659.99" y1="592.02" x2="668.20" y2="594.22" stroke="#808080" stroke-width="1.0" />
<line x1="661.42" y1="587.18" x2="669.51" y2="589.81" stroke="#808080" stroke-width="1.0" />
<line x1="663.11" y1="582.42" x2="671.04" y2="585.46" stroke="#808080" stroke-width="1.0" />
<line x1="665.04" y1="577.75" x2="672.81" y2="581.21" stroke="#808080" stroke-width="1.0" />
<line x1="667.22" y1="573.19" x2="674.79" y2="577.05" stroke="#808080" stroke-width="1.0" />
<line x1="669.63" y1="568.75" x2="676.99" y2="573.00" stroke="#808080" stroke-width="1.0" />
<line x1="672.27" y1="564.44" x2="679.40" y2="569.07" stroke="#808080" stroke-width="1.0" />
<line x1="675.13" y1="560.28" x2="682.01" y2="565.27" stroke="#808080" stroke-width="1.0" />
<line x1="678.21" y1="556.27" x2="684.81" y2="561.62" stroke="#808080" stroke-width="1.0" />
<line x1="681.49" y1="552.43" x2="687.80" y2="558.12" stroke="#808080" stroke-width="1.0" />
<line x1="684.96" y1="548.76" x2="690.97" y2="554.77" stroke="#808080" stroke-width="1.0" />
<line x1="688.63" y1="545.29" x2="694.32" y2="551.60" stroke="#808080" stroke-width="1.0" />
<line x1="692.47" y1="542.01" x2="697.82" y2="548.61" stroke="#808080" stroke-width="1.0" />
<line x1="696.48" y1="538.93" x2="701.47" y2="545.81" stroke="#808080" stroke-width="1.0" />
<line x1="700.64" y1="536.07" x2="705.27" y2="543.20" stroke="#808080" stroke-width="1.0" />
<line x1="704.95" y1="533.43" x2="709.20" y2="540.79" stroke="#808080" stroke-width="1.0" />
<line x1="709.39" y1="531.02" x2="713.25" y2="538.59" stroke="#808080" stroke-width="1.0" />
<line x1="713.95" y1="528.84" x2="717.41" y2="536.61" stroke="#808080" stroke-width="1.0" />
<line x1="718.62" y1="526.91" x2="721.66" y2="534.84" stroke="#808080" stroke-width="1.0" />
<line x1="723.38" y1="525.22" x2="726.01" y2="533.31" stroke="#808080" stroke-width="1.0" />
<line x1="728.22" y1="523.79" x2="730.42" y2="532.00" stroke="#808080" stroke-width="1.0" />
<line x1="733.14" y1="522.61" x2="734.90" y2="530.92" stroke="#808080" stroke-width="1.0" />
<line x1="738.10" y1="521.69" x2="739.43" y2="530.08" stroke="#808080" stroke-width="1.0" />
<line x1="743.11" y1="521.03" x2="744.00" y2="529.48" stroke="#808080" stroke-width="1.0" />
<line x1="748.15" y1="520.63" x2="748.59" y2="529.12" stroke="#808080" stroke-width="1.0" />
<line x1="753.20" y1="520.50" x2="753.20" y2="533.00" stroke="#808080" stroke-width="2.0" />
<line x1="758.25" y1="520.63" x2="757.81" y2="529.12" stroke="#808080" stroke-width="1.0" />
<line x1="763.29" y1="521.03" x2="762.40" y2="529.48" stroke="#808080" stroke-width="1.0" />
<line x1="768.30" y1="521.69" x2="766.97" y2="530.08" stroke="#808080" stroke-width="1.0" />
<line x1="773.26" y1="522.61" x2="771.50" y2="530.92" stroke="#808080" stroke-width="1.0" />
<line x1="778.18" y1="523.79" x2="775.98" y2="532.00" stroke="#808080" stroke-width="1.0" />
<line x1="783.02" y1="525.22" x2="780.39" y2="533.31" stroke="#808080" stroke-width="1.0" />
<line x1="787.78" y1="526.91" x2="784.74" y2="534.84" stroke="#808080" stroke-width="1.0" />
<line x1="792.45" y1="528.84" x2="788.99" y2="536.61" stroke="#808080" stroke-width="1.0" />
<line x1="797.01" y1="531.02" x2="793.15" y2="538.59" stroke="#808080" stroke-width="1.0" />
<line x1="801.45" y1="533.43" x2="797.20" y2="540.79" stroke="#808080" stroke-width="1.0" />
<line x1="805.76" y1="536.07" x2="801.13" y2="543.20" stroke="#808080" stroke-width="1.0" />
<line x1="809.92" y1="538.93" x2="804.93" y2="545.81" stroke="#808080" stroke-width="1.0" />
<line x1="813.93" y1="542.01" x2="808.58" y2="548.61" stroke="#808080" stroke-width="1.0" />
<line x1="817.77" y1="545.29" x2="812.08" y2="551.60" stroke="#808080" stroke-width="1.0" />
<line x1="821.44" y1="548.76" x2="815.43" y2="554.77" stroke="#808080" stroke-width="1.0" />
<line x1="824.91" y1="552.43" x2="818.60" y2="558.12" stroke="#808080" stroke-width="1.0" />
<line x1="828.19" y1="556.27" x2="821.59" y2="561.62" stroke="#808080" stroke-width="1.0" />
<line x1="831.27" y1="560.28" x2="824.39" y2="565.27" stroke="#808080" stroke-width="1.0" />
<line x1="834.13" y1="564.44" x2="827.00" y2="569.07" stroke="#808080" stroke-width="1.0" />
<line x1="836.77" y1="568.75" x2="829.41" y2="573.00" stroke="#808080" stroke-width="1.0" />
<line x1="839.18" y1="573.19" x2="831.61" y2="577.05" stroke="#808080" stroke-width="1.0" />
<line x1="841.36" y1="577.75" x2="833.59" y2="581.21" stroke="#808080" stroke-width="1.0" />
<line x1="843.29" y1="582.42" x2="835.36" y2="585.46" stroke="#808080" stroke-width="1.0" />
<line x1="844.98" y1="587.18" x2="836.89" y2="589.81" stroke="#808080" stroke-width="1.0" />
<line x1="846.41" y1="592.02" x2="838.20" y2="594.22" stroke="#808080" stroke-width="1.0" />
<line x1="847.59" y1="596.94" x2="839.28" y2="598.70" stroke="#808080" stroke-width="1.0" />
<line x1="848.51" y1="601.90" x2="840.12" y2="603.23" stroke="#808080" stroke-width="1.0" />
<line x1="849.17" y1="606.91" x2="840.72" y2="607.80" stroke="#808080" stroke-width="1.0" />
<line x1="849.57" y1="611.95" x2="841.08" y2="612.39" stroke="#808080" stroke-width="1.0" />
<line x1="849.70" y1="617.00" x2="837.20" y2="617.00" stroke="#808080" stroke-width="2.0" />
<text x="675.11" y="619.00" font-size="14" fill="#3a3a3a" font-weight="normal" >0</text>
<text x="727.30" y="548.00" font-size="14" fill="#3a3a3a" font-weight="normal" >7.5e+05</text>
<text x="779.50" y="619.00" font-size="14" fill="#3a3a3a" font-weight="normal" >1.5e+06</text>
<path d="M710.40,548.23 L751.42,618.11 L754.98,615.89 Z" fill="#c44e4e" />
<rect x="639" y="479" width="228.5" height="158.5" fill="none" stroke="#a8acc8" stroke-width="0.8" rx="0" />
<rect x="636" y="476" width="6" height="6" fill="#ffffff" stroke="#6a6e88" stroke-width="0.8" rx="0" />
<rect x="864.5" y="476" width="6" height="6" fill="#ffffff" stroke="#6a6e88" stroke-width="0.8" rx="0" />
<rect x="636" y="634.5" width="6" height="6" fill="#ffffff" stroke="#6a6e88" stroke-width="0.8" rx="0" />
<rect x="864.5" y="634.5" width="6" height="6" fill="#ffffff" stroke="#6a6e88" stroke-width="0.8" rx="0" />
<text x="712.00" y="658.00" font-size="14" fill="#3a8edc" textLength="81.00" lengthAdjust="spacingAndGlyphs" font-weight="normal" >Half Gauge1</text>
<text x="971.50" y="492.50" font-size="14.5" fill="#6e7186" textLength="135.20" lengthAdjust="spacingAndGlyphs" font-weight="normal" >MicroGrid Frequency</text>
<path d="M925.4999999999999,627.8 L925.4999999999999,619 A113.6,113.6 0 0 1 1152.6999999999998,619 L1152.6999999999998,627.8 Z" fill="url(#gframe)" stroke="#8c8fa2" stroke-width="1.1" />
<path d="M943.30,617.00 A95.7,95.7 0 0 1 1134.70,617.00" fill="none" stroke="#808080" stroke-width="1.6" />
<line x1="942.50" y1="617.00" x2="955.00" y2="617.00" stroke="#808080" stroke-width="2.0" />
<line x1="942.69" y1="610.94" x2="951.17" y2="611.47" stroke="#808080" stroke-width="1.0" />
<line x1="943.26" y1="604.91" x2="951.69" y2="605.97" stroke="#808080" stroke-width="1.0" />
<line x1="944.21" y1="598.92" x2="952.56" y2="600.51" stroke="#808080" stroke-width="1.0" />
<line x1="945.53" y1="593.00" x2="953.76" y2="595.12" stroke="#808080" stroke-width="1.0" />
<line x1="947.22" y1="587.18" x2="955.31" y2="589.81" stroke="#808080" stroke-width="1.0" />
<line x1="949.28" y1="581.48" x2="957.18" y2="584.61" stroke="#808080" stroke-width="1.0" />
<line x1="951.68" y1="575.91" x2="959.38" y2="579.53" stroke="#808080" stroke-width="1.0" />
<line x1="954.44" y1="570.51" x2="961.89" y2="574.61" stroke="#808080" stroke-width="1.0" />
<line x1="957.52" y1="565.29" x2="964.70" y2="569.85" stroke="#808080" stroke-width="1.0" />
<line x1="960.93" y1="560.28" x2="971.04" y2="567.63" stroke="#808080" stroke-width="2.0" />
<line x1="964.65" y1="555.49" x2="971.19" y2="560.91" stroke="#808080" stroke-width="1.0" />
<line x1="968.65" y1="550.94" x2="974.85" y2="556.76" stroke="#808080" stroke-width="1.0" />
<line x1="972.94" y1="546.65" x2="978.76" y2="552.85" stroke="#808080" stroke-width="1.0" />
<line x1="977.49" y1="542.65" x2="982.91" y2="549.19" stroke="#808080" stroke-width="1.0" />
<line x1="982.28" y1="538.93" x2="987.27" y2="545.81" stroke="#808080" stroke-width="1.0" />
<line x1="987.29" y1="535.52" x2="991.85" y2="542.70" stroke="#808080" stroke-width="1.0" />
<line x1="992.51" y1="532.44" x2="996.61" y2="539.89" stroke="#808080" stroke-width="1.0" />
<line x1="997.91" y1="529.68" x2="1001.53" y2="537.38" stroke="#808080" stroke-width="1.0" />
<line x1="1003.48" y1="527.28" x2="1006.61" y2="535.18" stroke="#808080" stroke-width="1.0" />
<line x1="1009.18" y1="525.22" x2="1013.04" y2="537.11" stroke="#808080" stroke-width="2.0" />
<line x1="1015.00" y1="523.53" x2="1017.12" y2="531.76" stroke="#808080" stroke-width="1.0" />
<line x1="1020.92" y1="522.21" x2="1022.51" y2="530.56" stroke="#808080" stroke-width="1.0" />
<line x1="1026.91" y1="521.26" x2="1027.97" y2="529.69" stroke="#808080" stroke-width="1.0" />
<line x1="1032.94" y1="520.69" x2="1033.47" y2="529.17" stroke="#808080" stroke-width="1.0" />
<line x1="1039.00" y1="520.50" x2="1039.00" y2="529.00" stroke="#808080" stroke-width="1.0" />
<line x1="1045.06" y1="520.69" x2="1044.53" y2="529.17" stroke="#808080" stroke-width="1.0" />
<line x1="1051.09" y1="521.26" x2="1050.03" y2="529.69" stroke="#808080" stroke-width="1.0" />
<line x1="1057.08" y1="522.21" x2="1055.49" y2="530.56" stroke="#808080" stroke-width="1.0" />
<line x1="1063.00" y1="523.53" x2="1060.88" y2="531.76" stroke="#808080" stroke-width="1.0" />
<line x1="1068.82" y1="525.22" x2="1064.96" y2="537.11" stroke="#808080" stroke-width="2.0" />
<line x1="1074.52" y1="527.28" x2="1071.39" y2="535.18" stroke="#808080" stroke-width="1.0" />
<line x1="1080.09" y1="529.68" x2="1076.47" y2="537.38" stroke="#808080" stroke-width="1.0" />
<line x1="1085.49" y1="532.44" x2="1081.39" y2="539.89" stroke="#808080" stroke-width="1.0" />
<line x1="1090.71" y1="535.52" x2="1086.15" y2="542.70" stroke="#808080" stroke-width="1.0" />
<line x1="1095.72" y1="538.93" x2="1090.73" y2="545.81" stroke="#808080" stroke-width="1.0" />
<line x1="1100.51" y1="542.65" x2="1095.09" y2="549.19" stroke="#808080" stroke-width="1.0" />
<line x1="1105.06" y1="546.65" x2="1099.24" y2="552.85" stroke="#808080" stroke-width="1.0" />
<line x1="1109.35" y1="550.94" x2="1103.15" y2="556.76" stroke="#808080" stroke-width="1.0" />
<line x1="1113.35" y1="555.49" x2="1106.81" y2="560.91" stroke="#808080" stroke-width="1.0" />
<line x1="1117.07" y1="560.28" x2="1106.96" y2="567.63" stroke="#808080" stroke-width="2.0" />
<line x1="1120.48" y1="565.29" x2="1113.30" y2="569.85" stroke="#808080" stroke-width="1.0" />
<line x1="1123.56" y1="570.51" x2="1116.11" y2="574.61" stroke="#808080" stroke-width="1.0" />
<line x1="1126.32" y1="575.91" x2="1118.62" y2="579.53" stroke="#808080" stroke-width="1.0" />
<line x1="1128.72" y1="581.48" x2="1120.82" y2="584.61" stroke="#808080" stroke-width="1.0" />
<line x1="1130.78" y1="587.18" x2="1122.69" y2="589.81" stroke="#808080" stroke-width="1.0" />
<line x1="1132.47" y1="593.00" x2="1124.24" y2="595.12" stroke="#808080" stroke-width="1.0" />
<line x1="1133.79" y1="598.92" x2="1125.44" y2="600.51" stroke="#808080" stroke-width="1.0" />
<line x1="1134.74" y1="604.91" x2="1126.31" y2="605.97" stroke="#808080" stroke-width="1.0" />
<line x1="1135.31" y1="610.94" x2="1126.83" y2="611.47" stroke="#808080" stroke-width="1.0" />
<line x1="1135.50" y1="617.00" x2="1123.00" y2="617.00" stroke="#808080" stroke-width="2.0" />
<path d="M1009.18,525.22 A96.5,96.5 0 0 1 1068.82,525.22 L1064.80,537.59 A83.5,83.5 0 0 0 1013.20,537.59 Z" fill="#6cc040" opacity="0.82" />
<text x="961.41" y="619.00" font-size="14" fill="#3a3a3a" font-weight="normal" >45</text>
<text x="976.21" y="574.40" font-size="14" fill="#3a3a3a" font-weight="normal" >47</text>
<text x="1012.51" y="553.00" font-size="14" fill="#3a3a3a" font-weight="normal" >49</text>
<text x="1051.21" y="553.00" font-size="14" fill="#3a3a3a" font-weight="normal" >51</text>
<text x="1085.91" y="574.40" font-size="14" fill="#3a3a3a" font-weight="normal" >53</text>
<text x="1100.21" y="619.00" font-size="14" fill="#3a3a3a" font-weight="normal" >55</text>
<path d="M1039.00,535.00 L1036.90,617.00 L1041.10,617.00 Z" fill="#c44e4e" />
<text x="984.40" y="273.30" font-size="14.5" fill="#6e7186" textLength="109.20" lengthAdjust="spacingAndGlyphs" font-weight="normal" >Battery SOC (%)</text>
<path d="M954.5,450.5 L954.5,425 A141.5,141.5 0 0 1 1096,283.5 L1122.5,283.5 L1122.5,450.5 Z" fill="url(#gframe)" stroke="#8c8fa2" stroke-width="1.1" />
<path d="M976.00,431.00 A128.5,128.5 0 0 1 1104.50,302.50" fill="none" stroke="#808080" stroke-width="3" />
<line x1="974.50" y1="431.00" x2="994.00" y2="431.00" stroke="#808080" stroke-width="2.6" />
<line x1="974.56" y1="426.92" x2="987.56" y2="427.32" stroke="#808080" stroke-width="1.6" />
<line x1="974.76" y1="422.84" x2="987.73" y2="423.65" stroke="#808080" stroke-width="1.6" />
<line x1="975.08" y1="418.77" x2="988.02" y2="419.99" stroke="#808080" stroke-width="1.6" />
<line x1="975.53" y1="414.71" x2="988.42" y2="416.34" stroke="#808080" stroke-width="1.6" />
<line x1="976.10" y1="410.66" x2="988.94" y2="412.70" stroke="#808080" stroke-width="1.6" />
<line x1="976.80" y1="406.64" x2="989.57" y2="409.08" stroke="#808080" stroke-width="1.6" />
<line x1="977.63" y1="402.64" x2="990.32" y2="405.48" stroke="#808080" stroke-width="1.6" />
<line x1="978.58" y1="398.67" x2="991.18" y2="401.90" stroke="#808080" stroke-width="1.6" />
<line x1="979.66" y1="394.73" x2="992.15" y2="398.36" stroke="#808080" stroke-width="1.6" />
<line x1="980.86" y1="390.83" x2="999.41" y2="396.85" stroke="#808080" stroke-width="2.6" />
<line x1="982.19" y1="386.96" x2="994.42" y2="391.37" stroke="#808080" stroke-width="1.6" />
<line x1="983.63" y1="383.14" x2="995.72" y2="387.93" stroke="#808080" stroke-width="1.6" />
<line x1="985.19" y1="379.37" x2="997.12" y2="384.53" stroke="#808080" stroke-width="1.6" />
<line x1="986.87" y1="375.65" x2="998.64" y2="381.18" stroke="#808080" stroke-width="1.6" />
<line x1="988.67" y1="371.98" x2="1000.25" y2="377.88" stroke="#808080" stroke-width="1.6" />
<line x1="990.58" y1="368.37" x2="1001.97" y2="374.63" stroke="#808080" stroke-width="1.6" />
<line x1="992.60" y1="364.82" x2="1003.79" y2="371.44" stroke="#808080" stroke-width="1.6" />
<line x1="994.74" y1="361.34" x2="1005.71" y2="368.31" stroke="#808080" stroke-width="1.6" />
<line x1="996.98" y1="357.93" x2="1007.73" y2="365.24" stroke="#808080" stroke-width="1.6" />
<line x1="999.33" y1="354.59" x2="1015.10" y2="366.05" stroke="#808080" stroke-width="2.6" />
<line x1="1001.78" y1="351.32" x2="1012.05" y2="359.29" stroke="#808080" stroke-width="1.6" />
<line x1="1004.33" y1="348.13" x2="1014.35" y2="356.42" stroke="#808080" stroke-width="1.6" />
<line x1="1006.99" y1="345.03" x2="1016.74" y2="353.63" stroke="#808080" stroke-width="1.6" />
<line x1="1009.73" y1="342.01" x2="1019.21" y2="350.91" stroke="#808080" stroke-width="1.6" />
<line x1="1012.58" y1="339.08" x2="1021.77" y2="348.27" stroke="#808080" stroke-width="1.6" />
<line x1="1015.51" y1="336.23" x2="1024.41" y2="345.71" stroke="#808080" stroke-width="1.6" />
<line x1="1018.53" y1="333.49" x2="1027.13" y2="343.24" stroke="#808080" stroke-width="1.6" />
<line x1="1021.63" y1="330.83" x2="1029.92" y2="340.85" stroke="#808080" stroke-width="1.6" />
<line x1="1024.82" y1="328.28" x2="1032.79" y2="338.55" stroke="#808080" stroke-width="1.6" />
<line x1="1028.09" y1="325.83" x2="1039.55" y2="341.60" stroke="#808080" stroke-width="2.6" />
<line x1="1031.43" y1="323.48" x2="1038.74" y2="334.23" stroke="#808080" stroke-width="1.6" />
<line x1="1034.84" y1="321.24" x2="1041.81" y2="332.21" stroke="#808080" stroke-width="1.6" />
<line x1="1038.32" y1="319.10" x2="1044.94" y2="330.29" stroke="#808080" stroke-width="1.6" />
<line x1="1041.87" y1="317.08" x2="1048.13" y2="328.47" stroke="#808080" stroke-width="1.6" />
<line x1="1045.48" y1="315.17" x2="1051.38" y2="326.75" stroke="#808080" stroke-width="1.6" />
<line x1="1049.15" y1="313.37" x2="1054.68" y2="325.14" stroke="#808080" stroke-width="1.6" />
<line x1="1052.87" y1="311.69" x2="1058.03" y2="323.62" stroke="#808080" stroke-width="1.6" />
<line x1="1056.64" y1="310.13" x2="1061.43" y2="322.22" stroke="#808080" stroke-width="1.6" />
<line x1="1060.46" y1="308.69" x2="1064.87" y2="320.92" stroke="#808080" stroke-width="1.6" />
<line x1="1064.33" y1="307.36" x2="1070.35" y2="325.91" stroke="#808080" stroke-width="2.6" />
<line x1="1068.23" y1="306.16" x2="1071.86" y2="318.65" stroke="#808080" stroke-width="1.6" />
<line x1="1072.17" y1="305.08" x2="1075.40" y2="317.68" stroke="#808080" stroke-width="1.6" />
<line x1="1076.14" y1="304.13" x2="1078.98" y2="316.82" stroke="#808080" stroke-width="1.6" />
<line x1="1080.14" y1="303.30" x2="1082.58" y2="316.07" stroke="#808080" stroke-width="1.6" />
<line x1="1084.16" y1="302.60" x2="1086.20" y2="315.44" stroke="#808080" stroke-width="1.6" />
<line x1="1088.21" y1="302.03" x2="1089.84" y2="314.92" stroke="#808080" stroke-width="1.6" />
<line x1="1092.27" y1="301.58" x2="1093.49" y2="314.52" stroke="#808080" stroke-width="1.6" />
<line x1="1096.34" y1="301.26" x2="1097.15" y2="314.23" stroke="#808080" stroke-width="1.6" />
<line x1="1100.42" y1="301.06" x2="1100.82" y2="314.06" stroke="#808080" stroke-width="1.6" />
<line x1="1104.50" y1="301.00" x2="1104.50" y2="320.50" stroke="#808080" stroke-width="2.6" />
<path d="M974.50,431.00 A130,130 0 0 1 976.10,410.66 L992.40,413.24 A113.5,113.5 0 0 0 991.00,431.00 Z" fill="#e0583a" opacity="0.88" />
<text x="999.11" y="431.50" font-size="14" fill="#3a3a3a" font-weight="normal" >0</text>
<text x="1003.41" y="407.50" font-size="14" fill="#3a3a3a" font-weight="normal" >20</text>
<text x="1018.21" y="378.50" font-size="14" fill="#3a3a3a" font-weight="normal" >40</text>
<text x="1037.91" y="359.00" font-size="14" fill="#3a3a3a" font-weight="normal" >60</text>
<text x="1067.21" y="344.00" font-size="14" fill="#3a3a3a" font-weight="normal" >80</text>
<text x="1086.52" y="337.50" font-size="14" fill="#3a3a3a" font-weight="normal" >100</text>
<path d="M1031.80,352.49 L1102.89,432.49 L1106.11,429.51 Z" fill="#c44e4e" />
<rect x="0" y="139.5" width="1489" height="105" fill="#ff1a00" rx="0" />
<text transform="translate(237.00,198.00) scale(0.76,1)" x="0" y="0" font-size="26" fill="#fff2e4" stroke="#fff2e4" stroke-width="0.45" textLength="1371.05" lengthAdjust="spacing" font-weight="normal">Dual Battery Energy Management in Microgrid MATLAB Simulink Simulation – Smart Energy Control</text>
<path d="M1476.5,730 L1489,733 L1489,808 L1451,808 Z" fill="url(#shad)" />
<path d="M980,698.5 L1487,698 L1451,808 L924.5,808 Z" fill="#ff1a00" />
<text transform="translate(1037.00,745.00) scale(0.8,1)" x="0" y="0" font-size="30.5" fill="#fff2e4" stroke="#fff2e4" stroke-width="0.4" textLength="455.00" lengthAdjust="spacing" font-weight="normal">For Queries +91 70516 83009</text>
<text transform="translate(1012.50,786.00) scale(0.8,1)" x="0" y="0" font-size="30" fill="#fff2e4" stroke="#fff2e4" stroke-width="0.4" textLength="485.62" lengthAdjust="spacing" font-weight="normal">www.ElectricalAssignment.com</text>
</svg>
</body></html>
